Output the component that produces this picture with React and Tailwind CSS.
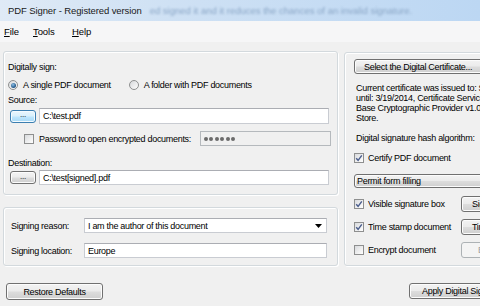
import React from "react";

const btnGrey =
  "border border-[#707070] rounded-[3px] bg-[linear-gradient(to_bottom,#f3f3f3_0%,#ebebeb_48%,#dddddd_52%,#cfcfcf_100%)] shadow-[inset_0_0_0_1px_#fcfcfc]";
const btnBlue =
  "border border-[#3c7fb1] rounded-[3px] bg-[linear-gradient(to_bottom,#eaf6fd_0%,#d9f0fc_48%,#bee6fd_52%,#a7d9f5_100%)] shadow-[inset_0_0_0_1px_#f4fbff]";
const inputCls =
  "bg-white border border-[#c9ccd2] border-t-[#abadb3] flex items-center pl-[3px]";
const groupCls =
  "border border-[#d3d9dd] rounded-[3px] shadow-[inset_1px_1px_0_#ffffff,1px_1px_0_#ffffff]";

function Check({ checked }) {
  return (
    <div className="w-[10px] h-[10px] shrink-0 border border-[#8e8f8f] bg-[linear-gradient(135deg,#d8dadd_0%,#f4f4f4_70%,#ffffff_100%)] flex items-center justify-center">
      {checked && (
        <svg width="8" height="8" viewBox="0 0 8 8">
          <path d="M1.2 4.2 L3.1 6.3 L6.8 1.4" fill="none" stroke="#4a5d8c" strokeWidth="1.4" />
        </svg>
      )}
    </div>
  );
}

function Radio({ checked }) {
  return (
    <div className="w-[10px] h-[10px] shrink-0 rounded-full border border-[#8e8f8f] bg-[linear-gradient(135deg,#d6d8db_0%,#f6f6f6_80%)] flex items-center justify-center">
      {checked && (
        <div className="w-[5px] h-[5px] rounded-full bg-[radial-gradient(circle_at_40%_35%,#8fc1e8_0%,#2a5f8f_60%,#1d3f66_100%)]" />
      )}
    </div>
  );
}

export default function App() {
  return (
    <div className="w-[480px] h-[306px] overflow-hidden bg-[#f0f0f0] text-black font-['Liberation_Sans',Arial,sans-serif] text-[9px] tracking-[-0.3px] leading-[12px]">
      {/* Title bar */}
      <div className="h-[21px] flex items-center bg-[linear-gradient(to_right,#dfeaf6_0%,#cfe1f4_35%,#bcd7f3_100%)] whitespace-nowrap overflow-hidden">
        <span className="pl-[8px] text-[9.5px] tracking-[-0.1px] text-[#1a1a1a]">PDF Signer - Registered version</span>
        <span className="ml-[8px] text-[9.5px] tracking-[0px] text-[#8aa6c6] blur-[1.3px]">
          ed signed it and it reduces the chances of an invalid signature.
        </span>
      </div>
      {/* Menu bar */}
      <div className="h-[21px] flex items-center bg-[#f6f6f7] text-[9.5px] tracking-[-0.1px] pl-[4px]">
        <span className="w-[29px]"><span className="underline underline-offset-1">F</span>ile</span>
        <span className="w-[39px]"><span className="underline underline-offset-1">T</span>ools</span>
        <span><span className="underline underline-offset-1">H</span>elp</span>
      </div>

      {/* Main area */}
      <div className="flex pt-[9px] pl-[3px]">
        {/* Left column */}
        <div className="w-[335px] shrink-0 flex flex-col">
          <div className={`${groupCls} h-[144px] pl-[4px] flex flex-col`}>
            <div className="mt-[9px] h-[12px] flex items-center">Digitally sign:</div>
            <div className="mt-[5px] h-[14px] flex items-center">
              <Radio checked />
              <span className="ml-[5px]">A single PDF document</span>
              <div className="ml-[18px]"><Radio /></div>
              <span className="ml-[5px]">A folder with PDF documents</span>
            </div>
            <div className="mt-[2px] h-[12px] flex items-center">Source:</div>
            <div className="mt-[2px] h-[16px] flex items-center">
              <div className={`${btnBlue} w-[26px] h-[13px] ml-[2px] flex items-center justify-center text-[8px] leading-none pb-[2px]`}>...</div>
              <div className={`${inputCls} ml-[3px] w-[290px] h-[16px]`}>C:\test.pdf</div>
            </div>
            <div className="mt-[7px] h-[15px] flex items-center">
              <div className="ml-[16px]"><Check /></div>
              <span className="ml-[5px]">Password to open encrypted documents:</span>
              <div className="ml-[9px] w-[131px] h-[15px] border border-[#b5b9bd] bg-[#f0f0f0] flex items-center pl-[3px] gap-[1.4px]">
                {[0, 1, 2, 3, 4, 5].map((i) => (
                  <div key={i} className="w-[4px] h-[4px] rounded-full bg-[#6b6b6b]" />
                ))}
              </div>
            </div>
            <div className="mt-[11px] h-[12px] flex items-center">Destination:</div>
            <div className="mt-[1px] h-[15px] flex items-center">
              <div className={`${btnGrey} w-[26px] h-[13px] ml-[2px] flex items-center justify-center text-[8px] leading-none pb-[2px]`}>...</div>
              <div className={`${inputCls} ml-[3px] w-[290px] h-[15px]`}>C:\test[signed].pdf</div>
            </div>
          </div>

          <div className={`${groupCls} mt-[12px] h-[59px] flex flex-col`}>
            <div className="mt-[10px] h-[15px] flex items-center">
              <span className="ml-[7px] w-[73px]">Signing reason:</span>
              <div className={`${inputCls} w-[243px] h-[15px] pl-[3px] justify-between`}>
                <span>I am the author of this document</span>
                <svg width="7" height="4" viewBox="0 0 7 4" className="mr-[4px]">
                  <path d="M0 0 H7 L3.5 4 Z" fill="#000" />
                </svg>
              </div>
            </div>
            <div className="mt-[10px] h-[15px] flex items-center">
              <span className="ml-[7px] w-[73px]">Signing location:</span>
              <div className={`${inputCls} w-[243px] h-[15px] pl-[3px]`}>Europe</div>
            </div>
          </div>
        </div>

        {/* Right panel */}
        <div className={`${groupCls} ml-[6px] mt-[1px] w-[190px] h-[214px] shrink-0 flex flex-col pl-[9px] whitespace-nowrap`}>
          <div className={`${btnGrey} mt-[6px] w-[152px] h-[15px] shrink-0 flex items-center pl-[9px]`}>
            Select the Digital Certificate...
          </div>
          <div className="mt-[9px] ml-[2px] leading-[10px]">
            <div>Current certificate was issued to: Some Name, valid</div>
            <div>until: 3/19/2014, Certificate Services: Microsoft</div>
            <div>Base Cryptographic Provider v1.0, Windows</div>
            <div>Store.</div>
          </div>
          <div className="mt-[10px] ml-[2px] h-[10px] flex items-center">Digital signature hash algorithm:</div>
          <div className="mt-[9px] h-[12px] flex items-center">
            <Check checked />
            <span className="ml-[4px]">Certify PDF document</span>
          </div>
          <div className={`${btnGrey} rounded-[2px] mt-[10px] w-[160px] h-[14px] shrink-0 flex items-center pl-[2px]`}>
            Permit form filling
          </div>
          <div className="mt-[8px] h-[16px] flex items-center">
            <Check checked />
            <span className="ml-[4px] w-[93px] shrink-0">Visible signature box</span>
            <div className={`${btnGrey} w-[70px] h-[16px] shrink-0 flex items-center pl-[10px]`}>Signature...</div>
          </div>
          <div className="mt-[7px] h-[16px] flex items-center">
            <Check checked />
            <span className="ml-[4px] w-[93px] shrink-0">Time stamp document</span>
            <div className={`${btnGrey} w-[70px] h-[16px] shrink-0 flex items-center pl-[10px]`}>Timestamp...</div>
          </div>
          <div className="mt-[7px] h-[16px] flex items-center">
            <Check />
            <span className="ml-[4px] w-[93px] shrink-0">Encrypt document</span>
            <div className="w-[70px] h-[16px] shrink-0 border border-[#adb2b5] rounded-[3px] bg-[#f4f4f4] flex items-center pl-[16px] text-[#a0a0a0]">
              Encrypt...
            </div>
          </div>
        </div>
      </div>

      {/* Bottom buttons */}
      <div className="mt-[17px] flex whitespace-nowrap">
        <div className={`${btnGrey} ml-[6px] w-[97px] h-[17px] shrink-0 flex items-center justify-center`}>
          Restore Defaults
        </div>
        <div className={`${btnGrey} ml-[306px] w-[119px] h-[16px] shrink-0 flex items-center pl-[12px]`}>
          Apply Digital Signature
        </div>
      </div>
    </div>
  );
}
